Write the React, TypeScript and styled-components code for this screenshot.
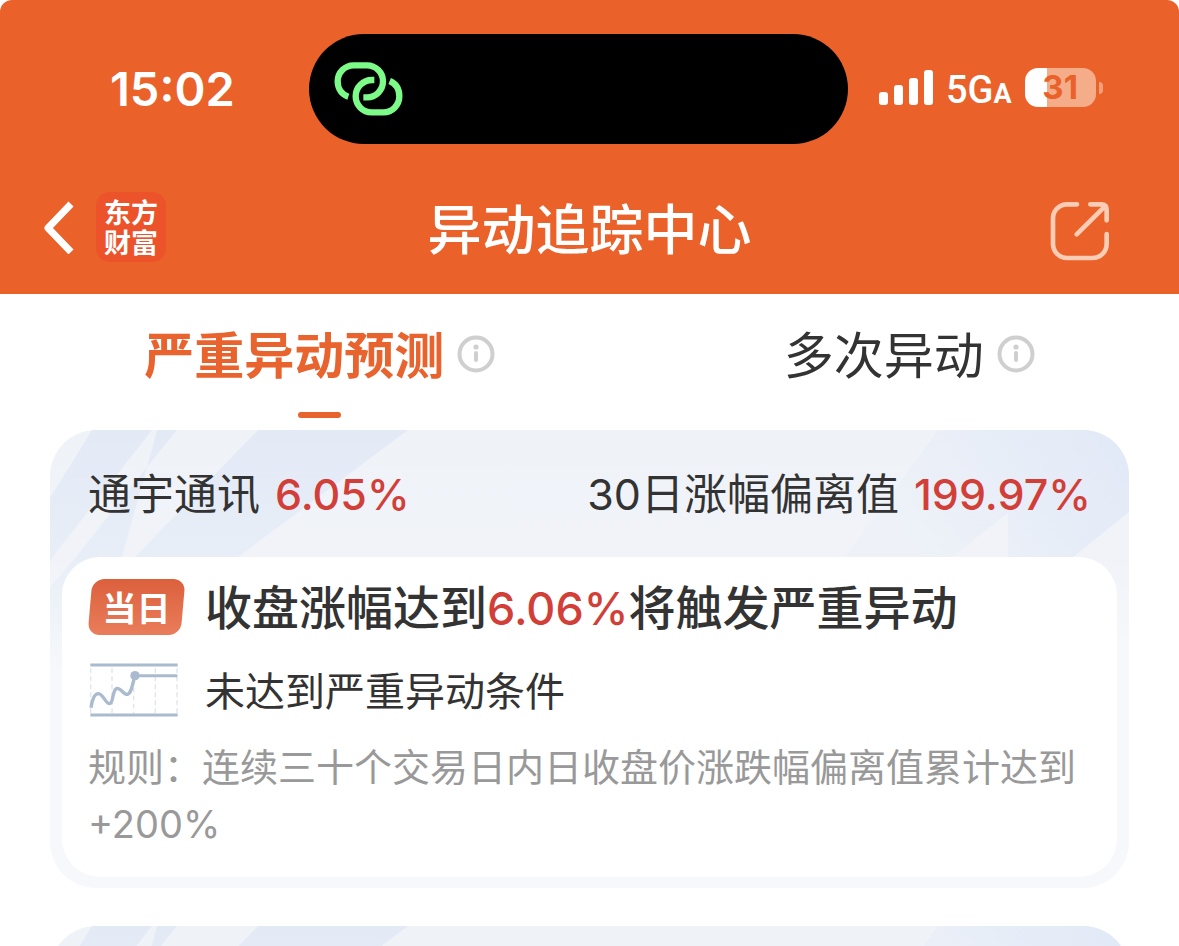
import React from "react";
import styled, { createGlobalStyle } from "styled-components";

const GlobalStyle = createGlobalStyle`
  * { box-sizing: border-box; }
  body {
    margin: 0;
    background: #fff;
    color: #333;
    font-family: Inter, "Noto Sans CJK SC", sans-serif;
  }
  button { margin: 0; padding: 0; border: 0; background: none; color: inherit; font: inherit; cursor: pointer; }
  h1, h2, p { margin: 0; font-weight: inherit; }
  svg { display: block; }
`;

const Screen = styled.div`
  height: 100vh;
  overflow: hidden;
  background: #fff;
`;

const Header = styled.header`
  height: 294px;
  padding-top: 34px;
  background: #ea612a;
  border-radius: 12px 12px 0 0;
  color: #fff;
`;

const StatusBar = styled.div`
  display: grid;
  grid-template-columns: 1fr 539px 1fr;
  align-items: center;
  height: 110px;
  padding-right: 22px;
`;

const Clock = styled.time`
  padding-left: 110px;
  font-size: 47px;
  font-weight: 600;
  line-height: 56px;
`;

const Island = styled.div`
  display: flex;
  align-items: center;
  height: 110px;
  padding-left: 25px;
  border-radius: 55px;
  background: #000;
`;

const Indicators = styled.div`
  display: flex;
  align-items: center;
  height: 40px;
  margin-bottom: 3px;
  padding-left: 31px;
`;

const Signal = styled.div`
  display: flex;
  align-items: flex-end;
  gap: 6px;
`;

const SignalBar = styled.span<{ $height: number }>`
  width: 9px;
  height: ${(p) => p.$height}px;
  border-radius: 3px;
  background: #fff;
`;

const Network = styled.span`
  margin-left: 13px;
  padding-top: 8px;
  font-family: Roboto, sans-serif;
  font-size: 38px;
  font-weight: 500;
  line-height: 40px;
`;

const NetworkSuffix = styled.span`
  font-size: 27px;
  font-weight: 700;
`;

const Battery = styled.div`
  display: grid;
  place-items: center;
  width: 71px;
  height: 39px;
  margin-left: 13px;
  border-radius: 13px;
  background: linear-gradient(90deg, #fff 22px, #f5ac89 22px);
  color: #ea612a;
  font-size: 33px;
  font-weight: 700;
  line-height: 39px;
`;

const BatteryTip = styled.span`
  width: 4px;
  height: 12px;
  margin-left: 3px;
  border-radius: 0 4px 4px 0;
  background: #f3a07a;
`;

const TitleBar = styled.div`
  display: grid;
  grid-template-columns: 1fr auto 1fr;
  align-items: center;
  height: 70px;
  margin-top: 48px;
  padding: 0 43px;
`;

const TitleLeft = styled.div`
  display: flex;
  align-items: center;
  gap: 22px;
`;

const Brand = styled.a`
  display: grid;
  place-content: center;
  width: 70px;
  height: 70px;
  border-radius: 14px;
  background: #ec532a;
  color: #fff;
  font-family: "Noto Sans CJK SC", sans-serif;
  font-size: 27px;
  font-weight: 700;
  line-height: 30px;
  text-decoration: none;
`;

const Title = styled.h1`
  padding-top: 8px;
  font-size: 54px;
  font-weight: 500;
  line-height: 62px;
`;

const ShareButton = styled.button`
  justify-self: end;
  margin: 8px 26px 0 0;
`;

const Tabs = styled.nav`
  display: flex;
  justify-content: space-around;
  height: 136px;
  padding-top: 24px;
`;

const Tab = styled.div`
  display: flex;
  flex-direction: column;
  align-items: center;
`;

const TabRow = styled.div`
  display: flex;
  align-items: center;
  gap: 13px;
  height: 72px;
`;

const TabButton = styled.button<{ $active?: boolean }>`
  padding-top: 4px;
  color: ${(p) => (p.$active ? "#e8632d" : "#333")};
  font-size: 50px;
  font-weight: ${(p) => (p.$active ? 700 : 400)};
  line-height: 72px;
`;

const TabMark = styled.span`
  width: 43px;
  height: 6px;
  margin-top: 22px;
  border-radius: 3px;
  background: #e8632d;
`;

const CardList = styled.main`
  display: flex;
  flex-direction: column;
  gap: 38px;
  padding: 0 50px;
`;

const CardFrame = styled.article`
  position: relative;
  overflow: hidden;
  padding: 0 12px 11px;
  border-radius: 46px;
  background: linear-gradient(180deg, #eff3f8 0, #f1f3f9 127px, #f6f8fb 220px);
`;

const Stripes = styled.svg<{ $side: "left" | "right" }>`
  position: absolute;
  top: 0;
  ${(p) => p.$side}: 0;
`;

const CardHeader = styled.div`
  position: relative;
  display: flex;
  justify-content: space-between;
  height: 127px;
  padding: 0 26px;
  font-size: 43px;
  line-height: 128px;
  white-space: nowrap;
`;

const Percent = styled.span<{ $spaced?: boolean }>`
  margin-left: ${(p) => (p.$spaced ? 15 : 0)}px;
  color: #d23f39;
  font-weight: 500;
`;

const CardBody = styled.div`
  position: relative;
  min-height: 320px;
  padding: 22px 24px 23px 26px;
  border-radius: 38px;
  background: #fff;
`;

const Line = styled.div<{ $gap?: boolean }>`
  display: flex;
  align-items: center;
  gap: 20px;
  height: 56px;
  margin-top: ${(p) => (p.$gap ? 27 : 0)}px;
`;

const DayBadge = styled.span`
  position: relative;
  display: grid;
  place-items: center;
  flex: none;
  width: 97px;
  height: 56px;
  color: #fff;
  font-size: 34px;
  font-weight: 700;
  line-height: 56px;
  &::before {
    content: "";
    position: absolute;
    inset: 0 2px;
    border-radius: 12px;
    background: linear-gradient(180deg, #dc603c, #e97d5b);
    transform: skewX(-5deg);
  }
`;

const BadgeText = styled.span`
  position: relative;
  padding-top: 2px;
`;

const ChartSlot = styled.span`
  flex: none;
  width: 97px;
`;

const Headline = styled.h2`
  padding-top: 3px;
  font-size: 47px;
  font-weight: 500;
  line-height: 56px;
  white-space: nowrap;
  ${Percent} { font-size: 45px; }
`;

const Condition = styled.p`
  padding-top: 3px;
  font-size: 40px;
  line-height: 56px;
`;

const Rule = styled.p`
  margin-top: 21px;
  color: #999;
  font-size: 38px;
  line-height: 57px;
`;

const LinkIcon = () => (
  <svg width="70" height="54" viewBox="1001 185 210 162" fill="none" stroke="#7dfb88" strokeWidth="19">
    <path d="M1044 289C1025 283 1012 266 1012 243A48 48 0 0 1 1060 195H1100A48 48 0 0 1 1148 243A48 48 0 0 1 1100 291H1089" />
    <path d="M1122 239H1115A49 49 0 0 0 1066 288A48 48 0 0 0 1114 336H1149A48 48 0 0 0 1197 288C1197 266 1187 250 1168 242" />
  </svg>
);

const BackIcon = () => (
  <svg width="31" height="54" viewBox="0 0 31 54" fill="none" stroke="#fff" strokeWidth="7" strokeLinejoin="round">
    <path d="M28 4L5 28L28 52" />
  </svg>
);

const ShareIcon = () => (
  <svg width="60" height="60" viewBox="629 514 180 180" fill="none" stroke="#fdccb4" strokeWidth="14" strokeLinecap="round" strokeLinejoin="round">
    <path d="M710 524H680A42 42 0 0 0 638 566V643A42 42 0 0 0 680 685H757A42 42 0 0 0 799 643V613" />
    <path d="M750 524H783Q799 524 799 540V572M709 614L793 531" />
  </svg>
);

const InfoIcon = () => (
  <svg width="38" height="38" viewBox="0 0 38 38" fill="none" stroke="#cfcfcf">
    <circle cx="19" cy="19" r="16.5" strokeWidth="4" />
    <circle cx="19" cy="12" r="2.6" fill="#cfcfcf" stroke="none" />
    <path d="M19 18V25" strokeWidth="4" strokeLinecap="round" />
  </svg>
);

const ChartIcon = () => (
  <svg width="91" height="56" viewBox="27 307 273 168" fill="none" stroke="#aabbd0">
    <path d="M35 326V462M99 326V462M164 360V462M229 326V462M294 326V462" stroke="#dfe4ee" strokeWidth="4" strokeDasharray="14 10" />
    <path d="M34 316H296M34 466H296" strokeWidth="9" />
    <path d="M168 348H295" strokeWidth="9" />
    <path d="M36 444C40 418 48 402 58 402C72 402 80 432 91 432C104 432 100 386 115 386C127 386 134 406 145 404C158 402 160 372 168 348" strokeWidth="10" />
    <circle cx="168" cy="348" r="14" fill="#aabbd0" stroke="none" />
  </svg>
);

const CardStripes = () => (
  <>
    <Stripes $side="left" width="360" height="240" viewBox="0 0 360 240" aria-hidden="true">
      <defs>
        <linearGradient id="fadeLeft" x1="0" y1="0" x2="0" y2="240" gradientUnits="userSpaceOnUse">
          <stop offset="0" stopColor="#e3eaf6" />
          <stop offset=".53" stopColor="#e8eef7" />
          <stop offset="1" stopColor="#f6f8fb" />
        </linearGradient>
      </defs>
      <g fill="url(#fadeLeft)">
        <path d="M42 0H102L8 120L0 131V68Z" />
        <path d="M107 0H127L97 37Z" />
        <path d="M97 37L72 127L50 240H0V157L26 127Z" />
        <path d="M208 0H358L188 127H85Z" />
      </g>
    </Stripes>
    <Stripes $side="right" width="290" height="128" viewBox="789 0 290 128" aria-hidden="true">
      <defs>
        <linearGradient id="fadeRight" x1="1050" y1="0" x2="860" y2="127" gradientUnits="userSpaceOnUse">
          <stop offset="0" stopColor="#e3eaf7" />
          <stop offset="1" stopColor="#eef2f8" />
        </linearGradient>
      </defs>
      <path d="M888 0H1079V82L1022 128H958V83L901 128H794Z" fill="url(#fadeRight)" />
    </Stripes>
  </>
);

interface TabItem {
  label: string;
  active?: boolean;
}

const tabs: TabItem[] = [{ label: "严重异动预测", active: true }, { label: "多次异动" }];

export default function App() {
  return (
    <>
      <GlobalStyle />
      <Screen>
        <Header>
          <StatusBar>
            <Clock>15:02</Clock>
            <Island>
              <LinkIcon />
            </Island>
            <Indicators>
              <Signal>
                {[13, 20, 27, 35].map((height) => (
                  <SignalBar key={height} $height={height} />
                ))}
              </Signal>
              <Network>
                5G<NetworkSuffix>A</NetworkSuffix>
              </Network>
              <Battery>31</Battery>
              <BatteryTip />
            </Indicators>
          </StatusBar>
          <TitleBar>
            <TitleLeft>
              <button type="button" aria-label="返回">
                <BackIcon />
              </button>
              <Brand href="#">
                <span>东方</span>
                <span>财富</span>
              </Brand>
            </TitleLeft>
            <Title>异动追踪中心</Title>
            <ShareButton type="button" aria-label="分享">
              <ShareIcon />
            </ShareButton>
          </TitleBar>
        </Header>
        <Tabs>
          {tabs.map((tab) => (
            <Tab key={tab.label}>
              <TabRow>
                <TabButton type="button" $active={tab.active}>
                  {tab.label}
                </TabButton>
                <button type="button" aria-label="说明">
                  <InfoIcon />
                </button>
              </TabRow>
              {tab.active && <TabMark />}
            </Tab>
          ))}
        </Tabs>
        <CardList>
          <CardFrame>
            <CardStripes />
            <CardHeader>
              <span>
                通宇通讯<Percent $spaced>6.05%</Percent>
              </span>
              <span>
                30日涨幅偏离值<Percent $spaced>199.97%</Percent>
              </span>
            </CardHeader>
            <CardBody>
              <Line>
                <DayBadge>
                  <BadgeText>当日</BadgeText>
                </DayBadge>
                <Headline>
                  收盘涨幅达到<Percent>6.06%</Percent>将触发严重异动
                </Headline>
              </Line>
              <Line $gap>
                <ChartSlot>
                  <ChartIcon />
                </ChartSlot>
                <Condition>未达到严重异动条件</Condition>
              </Line>
              <Rule>规则：连续三十个交易日内日收盘价涨跌幅偏离值累计达到+200%</Rule>
            </CardBody>
          </CardFrame>
          <CardFrame>
            <CardStripes />
            <CardHeader />
            <CardBody />
          </CardFrame>
        </CardList>
      </Screen>
    </>
  );
}
